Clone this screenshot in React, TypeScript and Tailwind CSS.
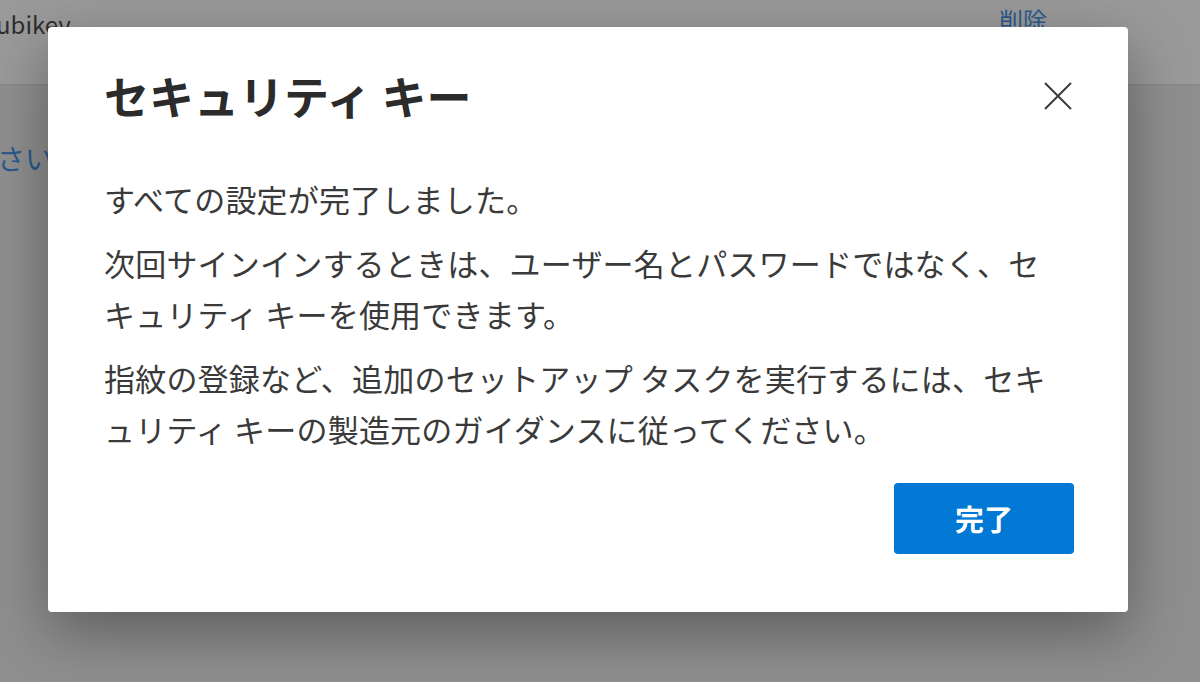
import React from "react";

const jp = { fontFamily: '"Noto Sans CJK JP", "Noto Sans", sans-serif' };

export default function App() {
  return (
    <div className="relative w-[1200px] h-[682px] overflow-hidden bg-[#8f8f8f]" style={jp}>
      {/* dimmed underlying page */}
      <div className="flex flex-col w-full h-full">
        <div className="flex items-start justify-between h-[86px] bg-[#9a9a9a] border-b-2 border-[#8a8a8a] pl-0 pr-[153px]">
          <span className="mt-[8px] -ml-[4px] text-[24px] text-[#2e2e2e] leading-[32px]">ubikey</span>
          <span className="mt-[4px] text-[24px] text-[#2a5a8c] leading-[32px]">削除</span>
        </div>
        <div className="flex flex-col bg-[#8f8f8f] flex-1">
          <span className="mt-[54px] -ml-[3px] text-[28px] text-[#2a5a8c] leading-[36px]">さい</span>
        </div>
      </div>

      {/* modal */}
      <div className="absolute left-[48px] top-[27px] w-[1080px] h-[585px] bg-white rounded-[4px] shadow-[0_20px_60px_rgba(0,0,0,0.35)] flex flex-col px-[56px] pt-[41px] pb-[58px]">
        <div className="flex items-center justify-between h-[56px]">
          <h1 className="text-[45px] leading-[56px] font-bold text-[#2b2b2b] whitespace-nowrap">セキュリティ キー</h1>
          <button className="w-[28px] h-[28px] flex items-center justify-center -mt-[1px]">
            <svg width="28" height="28" viewBox="0 0 28 28" fill="none">
              <path d="M1 1 L27 27 M27 1 L1 27" stroke="#3a3a3a" strokeWidth="2" />
            </svg>
          </button>
        </div>
        <div className="mt-[49px] flex flex-col gap-[13px] text-[31px] leading-[51px] tracking-[0.2px] text-[#3a3a3a] whitespace-nowrap">
          <p>すべての設定が完了しました。</p>
          <p>
            次回サインインするときは、ユーザー名とパスワードではなく、セ
            <br />
            キュリティ キーを使用できます。
          </p>
          <p>
            指紋の登録など、追加のセットアップ タスクを実行するには、セキ
            <br />
            ュリティ キーの製造元のガイダンスに従ってください。
          </p>
        </div>
        <div className="mt-auto flex justify-end">
          <button className="w-[180px] h-[71px] mr-[-2px] rounded-[4px] bg-[#0078d4] text-white text-[29px] font-bold flex items-center justify-center">
            完了
          </button>
        </div>
      </div>
    </div>
  );
}
